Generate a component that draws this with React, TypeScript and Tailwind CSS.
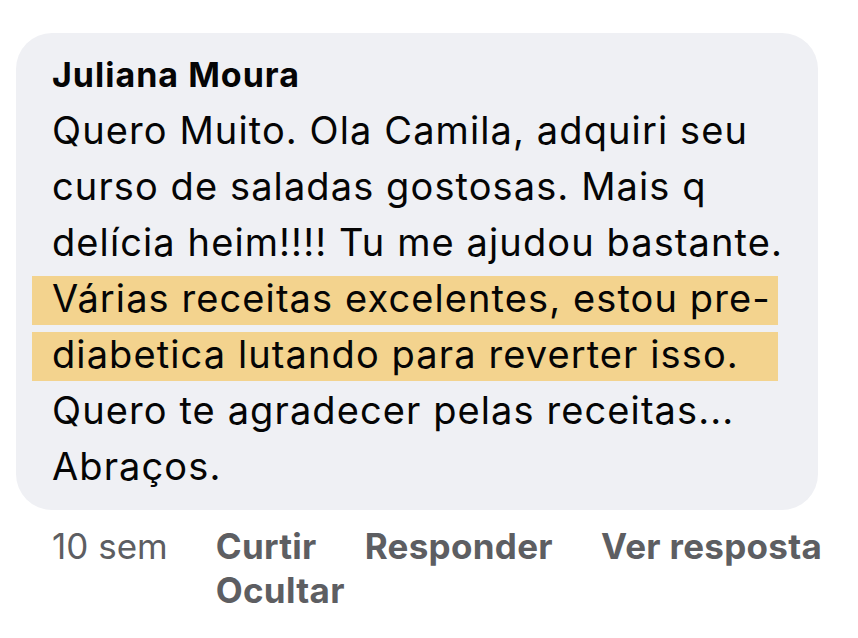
const lines = [
  { text: "Quero Muito. Ola Camila, adquiri seu", mark: false },
  { text: "curso de saladas gostosas. Mais q", mark: false },
  { text: "delícia heim!!!! Tu me ajudou bastante.", mark: false },
  { text: "Várias receitas excelentes, estou pre-", mark: true },
  { text: "diabetica lutando para reverter isso.", mark: true },
  { text: "Quero te agradecer pelas receitas...", mark: false },
  { text: "Abraços.", mark: false },
];

export default function App() {
  return (
    <div className="w-[858px] h-[638px] bg-white overflow-hidden font-['Inter',sans-serif] text-[#050505]">
      {/* balão do comentário */}
      <div className="ml-[16px] mt-[33px] w-[802px] rounded-[36px] bg-[#eff0f4] px-[16px] pt-[22px] pb-[16px]">
        <div className="pl-[20px] text-[34px] leading-[40px] font-bold tracking-[1px]">
          Juliana Moura
        </div>
        <div className="mt-[7px] text-[38px] tracking-[1.1px]">
          {lines.map((l, i) =>
            l.mark ? (
              <div key={i} className="h-[56px] pt-[6px]">
                <div className="h-[49px] w-[746px] bg-[#f3d38e] pl-[20px] leading-[44px] whitespace-nowrap">
                  {l.text}
                </div>
              </div>
            ) : (
              <div key={i} className="h-[56px] pl-[20px] leading-[56px] whitespace-nowrap">
                {l.text}
              </div>
            )
          )}
        </div>
      </div>

      {/* ações */}
      <div className="flex pl-[52px] pt-[14px] text-[35px] leading-[44px] text-[#5d5e62]">
        <span className="mr-[48px] whitespace-nowrap">10 sem</span>
        <div className="flex flex-wrap gap-x-[48px] font-bold tracking-[0.3px] w-[620px]">
          <span>Curtir</span>
          <span>Responder</span>
          <span className="whitespace-nowrap">Ver resposta</span>
          <span>Ocultar</span>
        </div>
      </div>
    </div>
  );
}
